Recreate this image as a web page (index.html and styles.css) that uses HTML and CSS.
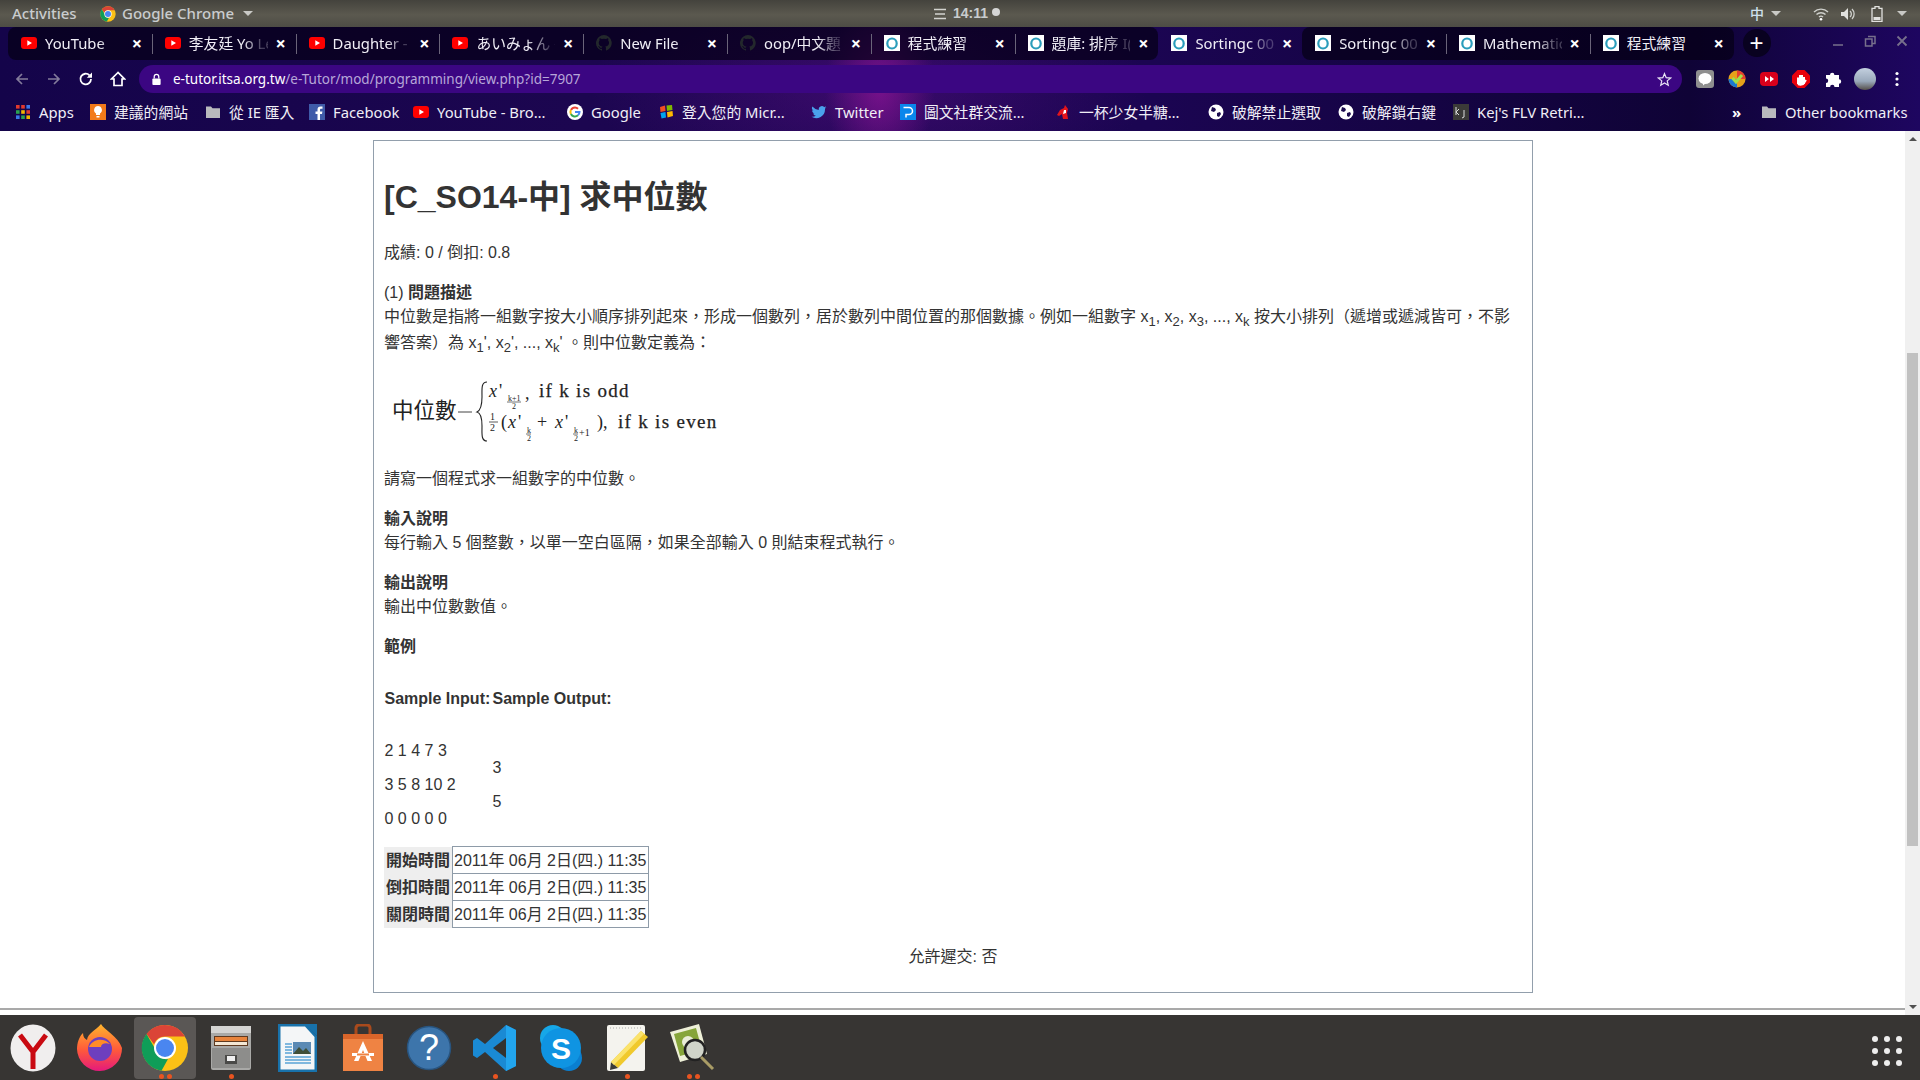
FILE: index.html
```html
<!DOCTYPE html>
<html lang="zh-Hant">
<head>
<meta charset="utf-8">
<title>程式練習</title>
<link rel="stylesheet" href="styles.css">
</head>
<body>
<svg class="defs" aria-hidden="true">
  <symbol id="i-yt" viewBox="0 0 16 16"><rect x="0" y="2" width="16" height="12" rx="3" fill="#f00"/><path d="M6.3 5.2 11 8l-4.700 2.800z" fill="#fff"/></symbol>
  <symbol id="i-tutor" viewBox="0 0 16 16"><rect width="16" height="16" fill="#fff"/><ellipse cx="8" cy="8.500" rx="4.700" ry="5" fill="none" stroke="#2a9dbb" stroke-width="2.200"/></symbol>
  <symbol id="i-gh" viewBox="0 0 16 16"><path fill="#23282c" d="M8 0a8 8 0 0 0-2.500 15.600c.4.100.5-.2.500-.4v-1.400c-2.200.5-2.700-1-2.700-1-.4-.9-.9-1.200-.9-1.200-.7-.5.100-.5.100-.5.800.1 1.200.8 1.200.8.700 1.200 1.900.9 2.300.7.100-.5.300-.9.500-1.100-1.800-.2-3.700-.9-3.700-4 0-.9.300-1.600.8-2.100-.1-.2-.4-1 .1-2.100 0 0 .7-.2 2.200.8a7.600 7.600 0 0 1 4 0c1.500-1 2.200-.8 2.200-.8.400 1.100.2 1.900.1 2.100.5.600.8 1.300.8 2.100 0 3.100-1.900 3.700-3.700 3.900.3.300.6.700.6 1.500v2.200c0 .2.100.5.600.4A8 8 0 0 0 8 0z"/></symbol>
  <symbol id="i-chrome" viewBox="0 0 48 48"><circle cx="24" cy="24" r="23" fill="#fbc116"/><path d="M24 1a23 23 0 0 1 20 11.500H24a11.500 11.500 0 0 0-10.900 7.800L5.500 9.900A23 23 0 0 1 24 1z" fill="#db4437"/><path d="M5.500 9.900l10 17.300A9.500 9.500 0 0 0 27 35l-6.500 11.700A23 23 0 0 1 5.500 9.900z" fill="#0f9d58"/><circle cx="24" cy="24" r="11" fill="#fff"/><circle cx="24" cy="24" r="9" fill="#4a86f0"/></symbol>
  <symbol id="i-globe" viewBox="0 0 16 16"><circle cx="8" cy="8" r="7.500" fill="#fff"/><path d="M4 3l3 1 1 2-2 2-3-1zM9 9l3-1 1 2-2 3-2-1z" fill="#1c0b4e"/></symbol>
  <symbol id="i-folder" viewBox="0 0 16 16"><path d="M1 2.500h5l1.500 1.800H15V14H1z" fill="#b9b9bd"/></symbol>
</svg>

<div class="topbar">
  <div class="top-left">
    <span class="activities">Activities</span>
    <span class="appmenu"><svg class="ico16"><use href="#i-chrome"/></svg><span>Google Chrome</span><i class="caret"></i></span>
  </div>
  <div class="top-center">
    <svg class="cal" viewBox="0 0 12 12"><path d="M0 1.500h12M1 6h10M0 10.500h12" stroke="#d3d3cf" stroke-width="1.500"/></svg>
    <b>14:11</b><i class="dot"></i>
  </div>
  <div class="top-right">
    <span class="ime">中</span><i class="caret"></i>
    <svg class="tray-wifi" viewBox="0 0 16 14"><path d="M1 5a10 10 0 0 1 14 0M3.500 7.500a6.500 6.500 0 0 1 9 0M6 10a3 3 0 0 1 4 0" fill="none" stroke="#cfd0cc" stroke-width="1.400"/><circle cx="8" cy="12.200" r="1.300" fill="#fff"/></svg>
    <svg class="tray-vol" viewBox="0 0 16 14"><path d="M1 5h3l4-4v12l-4-4H1z" fill="#e2e2df"/><path d="M10 4a4 4 0 0 1 0 6M12 2a7 7 0 0 1 0 10" fill="none" stroke="#cfd0cc" stroke-width="1.300"/></svg>
    <svg class="tray-bat" viewBox="0 0 12 16"><path d="M4 .700h4v1.600h3v13H1v-13h3z" fill="none" stroke="#e2e2df" stroke-width="1.300"/><rect x="2.500" y="11" width="7" height="3" fill="#e2e2df"/></svg>
    <i class="caret"></i>
  </div>
</div>

<header class="chrome">
  <div class="tabstrip">
    <div class="tab dark first"><svg class="ico16"><use href="#i-yt"/></svg><span class="tab-title">YouTube</span><span class="tab-x">×</span></div>
    <div class="tab dark sep"><svg class="ico16"><use href="#i-yt"/></svg><span class="tab-title">李友廷 Yo Le</span><span class="tab-x">×</span></div>
    <div class="tab dark sep"><svg class="ico16"><use href="#i-yt"/></svg><span class="tab-title">Daughter - S</span><span class="tab-x">×</span></div>
    <div class="tab dark sep"><svg class="ico16"><use href="#i-yt"/></svg><span class="tab-title">あいみょん -</span><span class="tab-x">×</span></div>
    <div class="tab dark sep"><svg class="ico16"><use href="#i-gh"/></svg><span class="tab-title">New File</span><span class="tab-x">×</span></div>
    <div class="tab dark sep"><svg class="ico16"><use href="#i-gh"/></svg><span class="tab-title">oop/中文題</span><span class="tab-x">×</span></div>
    <div class="tab dark sep"><svg class="ico16"><use href="#i-tutor"/></svg><span class="tab-title">程式練習</span><span class="tab-x">×</span></div>
    <div class="tab dark last sep"><svg class="ico16"><use href="#i-tutor"/></svg><span class="tab-title">題庫: 排序 I(</span><span class="tab-x">×</span></div>
    <div class="tab"><svg class="ico16"><use href="#i-tutor"/></svg><span class="tab-title">Sortingc 00</span><span class="tab-x">×</span></div>
    <div class="tab dark first"><svg class="ico16"><use href="#i-tutor"/></svg><span class="tab-title">Sortingc 00</span><span class="tab-x">×</span></div>
    <div class="tab dark sep"><svg class="ico16"><use href="#i-tutor"/></svg><span class="tab-title">Mathematic</span><span class="tab-x">×</span></div>
    <div class="tab dark sep last"><svg class="ico16"><use href="#i-tutor"/></svg><span class="tab-title plain">程式練習</span><span class="tab-x">×</span></div>
    <span class="newtab">+</span>
    <div class="winctl">
      <svg viewBox="0 0 12 12"><path d="M1 10h10" stroke="#77708c" stroke-width="1.500"/></svg>
      <svg viewBox="0 0 12 12"><path d="M4 1.500h7v7H8M1.500 4h6.500v7h-6.500z" fill="none" stroke="#77708c" stroke-width="1.500"/></svg>
      <svg viewBox="0 0 12 12"><path d="M1.500 1.500l9 9M10.500 1.500l-9 9" stroke="#77708c" stroke-width="1.800"/></svg>
    </div>
  </div>

  <div class="toolbar">
    <svg class="nav" viewBox="0 0 16 16"><path d="M14 8H3M8 3 3 8l5 5" fill="none" stroke="#837b9b" stroke-width="1.700"/></svg>
    <svg class="nav" viewBox="0 0 16 16"><path d="M2 8h11M8 3l5 5-5 5" fill="none" stroke="#837b9b" stroke-width="1.700"/></svg>
    <svg class="nav" viewBox="0 0 16 16"><path d="M13 8a5.300 5.300 0 1 1-1.500-3.700" fill="none" stroke="#fff" stroke-width="1.800"/><path d="M14 1.500v5.200H8.800z" fill="#fff"/></svg>
    <svg class="nav" viewBox="0 0 16 16"><path d="M8 1.500 1.500 8H4v6.500h8V8h2.500z" fill="none" stroke="#fff" stroke-width="1.700"/></svg>
    <div class="omnibox">
      <svg class="lock" viewBox="0 0 12 14"><path d="M3.500 6V4a2.500 2.500 0 0 1 5 0v2" fill="none" stroke="#fff" stroke-width="1.400"/><rect x="1.500" y="6" width="9" height="7" rx="1" fill="#fff"/></svg>
      <span class="url"><b>e-tutor.itsa.org.tw</b>/e-Tutor/mod/programming/view.php?id=7907</span>
      <svg class="star" viewBox="0 0 16 16"><path d="m8 1.800 1.800 4.300 4.700.4-3.600 3 1.100 4.600L8 11.700l-4 2.400 1.100-4.600-3.600-3 4.700-.4z" fill="none" stroke="#e9e4f4" stroke-width="1.300"/></svg>
    </div>
    <div class="exts">
      <svg viewBox="0 0 18 18"><rect width="18" height="18" rx="3" fill="#8f8f8f"/><ellipse cx="9" cy="8.500" rx="6.500" ry="5.500" fill="#fff"/><path d="M7 13h3l-3 2.500z" fill="#fff"/></svg>
      <svg viewBox="0 0 18 18"><circle cx="9" cy="9" r="8.500" fill="#e6a21a"/><path d="M9 .5A8.500 8.500 0 0 1 17.500 9H9z" fill="#e43f30"/><path d="M.5 9A8.500 8.500 0 0 0 9 17.500V9z" fill="#1b78d0"/><path d="M4.500 8 8 12l6-7" fill="none" stroke="#9fe04a" stroke-width="3"/></svg>
      <svg viewBox="0 0 18 18"><rect y="2" width="18" height="14" rx="4" fill="#d9001b"/><path d="M5 6l4 3-4 3zM10 6l4 3-4 3z" fill="#fff"/></svg>
      <svg viewBox="0 0 18 18"><path d="M5.500 0h7L18 5.500v7L12.500 18h-7L0 12.500v-7z" fill="#e8000b"/><path d="M6 14V7.500M8 14V5M10 14V5M12 14V7M6 14c2 1 5 1 6-1l2-3" fill="none" stroke="#fff" stroke-width="2"/></svg>
      <svg viewBox="0 0 18 18"><path d="M2 5h4a2.200 2.200 0 1 1 4.400 0H15v4.300a2.200 2.200 0 1 1 0 4.400V17h-4.500a2.200 2.200 0 1 0-4.400 0H2v-4a2.200 2.200 0 1 0 0-4.400z" fill="#fff"/></svg>
      <svg class="avatar" viewBox="0 0 22 22"><defs><linearGradient id="av" x1="0" x2="0" y1="0" y2="1"><stop offset="0" stop-color="#c3d0df"/><stop offset=".6" stop-color="#9aa9bb"/><stop offset="1" stop-color="#554f4a"/></linearGradient></defs><circle cx="11" cy="11" r="11" fill="url(#av)"/></svg>
      <svg viewBox="0 0 18 18"><circle cx="9" cy="3.500" r="1.600" fill="#fff"/><circle cx="9" cy="9" r="1.600" fill="#fff"/><circle cx="9" cy="14.500" r="1.600" fill="#fff"/></svg>
    </div>
  </div>

  <nav class="bookmarks">
    <div class="bm"><svg class="ico16" viewBox="0 0 16 16"><g fill="#e23a2e"><rect x="1" y="1" width="3.600" height="3.600"/><rect x="6.200" y="1" width="3.600" height="3.600"/></g><rect x="11.400" y="1" width="3.600" height="3.600" fill="#3a77e8"/><rect x="1" y="6.200" width="3.600" height="3.600" fill="#2aa24f"/><rect x="6.200" y="6.200" width="3.600" height="3.600" fill="#f4b400"/><rect x="11.400" y="6.200" width="3.600" height="3.600" fill="#e23a2e"/><rect x="1" y="11.400" width="3.600" height="3.600" fill="#3a77e8"/><rect x="6.200" y="11.400" width="3.600" height="3.600" fill="#2aa24f"/><rect x="11.400" y="11.400" width="3.600" height="3.600" fill="#f4b400"/></svg><span>Apps</span></div>
    <div class="bm"><svg class="ico16" viewBox="0 0 16 16"><rect width="16" height="16" fill="#f27a1a"/><path d="M8 2a4 4 0 0 0-2 7.400V11h4V9.400A4 4 0 0 0 8 2zM6.500 12h3v1.500h-3z" fill="#fff"/></svg><span>建議的網站</span></div>
    <div class="bm"><svg class="ico16"><use href="#i-folder"/></svg><span>從 IE 匯入</span></div>
    <div class="bm"><svg class="ico16" viewBox="0 0 16 16"><rect width="16" height="16" fill="#3f5ba9"/><path d="M11 16v-6h2l.4-2.500H11V6c0-.8.300-1.200 1.200-1.200h1.300V2.600c-.5 0-1.200-.1-1.900-.1-2 0-3.100 1.100-3.100 3.200v1.800H6.500V10h2v6z" fill="#fff"/></svg><span>Facebook</span></div>
    <div class="bm"><svg class="ico16"><use href="#i-yt"/></svg><span>YouTube - Bro…</span></div>
    <div class="bm"><svg class="ico16" viewBox="0 0 16 16"><circle cx="8" cy="8" r="8" fill="#fff"/><path d="M8 3.500a4.500 4.500 0 0 1 3 1.200" fill="none" stroke="#ea4335" stroke-width="2"/><path d="M4 6a4.500 4.500 0 0 1 4-2.500" fill="none" stroke="#ea4335" stroke-width="2"/><path d="M3.900 10a4.500 4.500 0 0 1 0-4" fill="none" stroke="#fbbc05" stroke-width="2"/><path d="M11 11.300A4.500 4.500 0 0 1 3.900 10" fill="none" stroke="#34a853" stroke-width="2"/><path d="M8 8h4.500a4.500 4.500 0 0 1-1.500 3.300" fill="none" stroke="#4285f4" stroke-width="2"/></svg><span>Google</span></div>
    <div class="bm"><svg class="ico16" viewBox="0 0 16 16"><path d="M2 3l5-1.500L7.500 7 2.500 8z" fill="#f25022"/><path d="M8.500 1.500 14 1l.5 5-5.500 1z" fill="#7fba00"/><path d="M2.500 9l5-1 .5 5.500-4.500 1z" fill="#00a4ef"/><path d="M9 8l5.500-1 .5 5-5.500 1.500z" fill="#ffb900"/></svg><span>登入您的 Micr…</span></div>
    <div class="bm"><svg class="ico16" viewBox="0 0 16 16"><path d="M15.500 3.500c-.6.300-1.200.4-1.800.5.600-.4 1.100-1 1.400-1.700-.6.400-1.300.6-2 .8a3.100 3.100 0 0 0-5.300 2.800A8.800 8.800 0 0 1 1.400 2.600 3.100 3.100 0 0 0 2.400 6.700c-.5 0-1-.2-1.400-.4 0 1.500 1.100 2.800 2.500 3.100-.5.100-.9.100-1.400 0 .4 1.200 1.500 2.100 2.900 2.100A6.200 6.200 0 0 1 .5 12.800 8.800 8.800 0 0 0 14 5v-.4c.6-.3 1.100-.7 1.500-1.100z" fill="#4aa1eb"/></svg><span>Twitter</span></div>
    <div class="bm"><svg class="ico16" viewBox="0 0 16 16"><rect width="16" height="16" fill="#0a86ec"/><path d="M3.500 3.500H9a3.500 3.500 0 0 1 0 7H6v3" fill="none" stroke="#fff" stroke-width="1.500"/></svg><span>圖文社群交流…</span></div>
    <div class="bm"><svg class="ico16" viewBox="0 0 16 16"><path d="M10 1 9 4 5 6 2 11l2 1 3-2 1 5h5l-1-6 1-4z" fill="#e3141b"/><path d="M9 6l2 0 0 3-3 1z" fill="#fff"/></svg><span>一杯少女半糖…</span></div>
    <div class="bm"><svg class="ico16"><use href="#i-globe"/></svg><span>破解禁止選取</span></div>
    <div class="bm"><svg class="ico16"><use href="#i-globe"/></svg><span>破解鎖右鍵</span></div>
    <div class="bm"><svg class="ico16" viewBox="0 0 16 16"><rect width="16" height="16" fill="#3b3a38"/><path d="M3 3v8M3 8l3-3M3 8l3 3M11 6v7l-2 1" fill="none" stroke="#ddd" stroke-width="1"/></svg><span>Kej's FLV Retri…</span></div>
    <span class="bm-more">»</span>
    <div class="bm other"><svg class="ico16"><use href="#i-folder"/></svg><span>Other bookmarks</span></div>
  </nav>
</header>

<div class="viewport">
  <main class="page">
    <article class="panel">
      <h2 class="title">[C_SO14-中] 求中位數</h2>
      <p class="para">成績: 0 / 倒扣: 0.8</p>
      <div class="para">
        <div>(1) <strong>問題描述</strong></div>
        <div class="desc">中位數是指將一組數字按大小順序排列起來，形成一個數列，居於數列中間位置的那個數據。例如一組數字 x<sub>1</sub>, x<sub>2</sub>, x<sub>3</sub>, ..., x<sub>k</sub> 按大小排列（遞增或遞減皆可，不影響答案）為 x<sub>1</sub>', x<sub>2</sub>', ..., x<sub>k</sub>' 。則中位數定義為：</div>
      </div>
      <svg class="formula" viewBox="0 5 340 75" aria-label="中位數公式">
        <text class="fm-cjk" x="8" y="47">中位數</text>
        <path d="M74 41h14" stroke="#444" stroke-width="1"/>
        <path d="M103 11C97 11 98 18 98 26 98 34 97 39 93 41 97 42 98 47 98 55 98 63 97 70 103 70" fill="none" stroke="#222" stroke-width="1.100"/>
        <text class="fm-i" x="105" y="26">x</text><text class="fm" x="115" y="26">'</text>
        <text class="fm-t" x="124" y="30">k+1</text><path d="M123 31h14" stroke="#333" stroke-width=".7"/><text class="fm-t" x="128" y="38">2</text>
        <text class="fm" x="141" y="28">,</text>
        <text class="fm-w" x="155" y="26">if k is odd</text>
        <text class="fm-s" x="106" y="49">1</text><path d="M105 51h9" stroke="#333" stroke-width=".8"/><text class="fm-s" x="106" y="60">2</text>
        <text class="fm" x="117" y="57">(</text><text class="fm-i" x="124" y="57">x</text><text class="fm" x="134" y="57">'</text>
        <text class="fm-t" x="143" y="62">k</text><path d="M142 63h5" stroke="#333" stroke-width=".7"/><text class="fm-t" x="143" y="70">2</text>
        <text class="fm" x="153" y="57">+</text>
        <text class="fm-i" x="171" y="57">x</text><text class="fm" x="181" y="57">'</text>
        <text class="fm-t" x="190" y="62">k</text><path d="M189 63h5" stroke="#333" stroke-width=".7"/><text class="fm-t" x="190" y="70">2</text><text class="fm-t2" x="195" y="65">+1</text>
        <text class="fm" x="213" y="57">),</text>
        <text class="fm-w" x="234" y="57">if k is even</text>
      </svg>
      <p class="para">請寫一個程式求一組數字的中位數。</p>
      <div class="para"><strong>輸入說明</strong><br>每行輸入 5 個整數，以單一空白區隔，如果全部輸入 0 則結束程式執行。</div>
      <div class="para"><strong>輸出說明</strong><br>輸出中位數數值。</div>
      <div class="para"><strong>範例</strong></div>
      <div class="sample">
        <strong>Sample Input:</strong><strong>Sample Output:</strong>
        <div class="sample-col"><p>2 1 4 7 3</p><p>3 5 8 10 2</p><p>0 0 0 0 0</p></div>
        <div class="sample-col"><p>3</p><p>5</p></div>
      </div>
      <table class="times">
        <tr><th>開始時間</th><td>2011年 06月 2日(四.) 11:35</td></tr>
        <tr><th>倒扣時間</th><td>2011年 06月 2日(四.) 11:35</td></tr>
        <tr><th>關閉時間</th><td>2011年 06月 2日(四.) 11:35</td></tr>
      </table>
      <p class="late">允許遲交: 否</p>
    </article>
    <div class="page-rule"></div>
  </main>
  <aside class="scrollbar">
    <i class="arrow-up"></i>
    <div class="track"><div class="thumb"></div></div>
    <i class="arrow-down"></i>
  </aside>
</div>

<footer class="dock">
  <div class="dock-item"><svg viewBox="0 0 48 48"><ellipse cx="24" cy="24" rx="22.500" ry="23.500" fill="#f0eeee"/><path d="M11 11l13 17 13-17M24 28v17" fill="none" stroke="#c90a12" stroke-width="5"/></svg></div>
  <div class="dock-item"><svg viewBox="0 0 48 48"><defs><linearGradient id="ff" x1="0" x2="0" y1="0" y2="1"><stop offset="0" stop-color="#ffb52c"/><stop offset=".55" stop-color="#ff5a3a"/><stop offset="1" stop-color="#e5197c"/></linearGradient></defs><path d="M26 0c3 6 17 12 21 24a22.500 22.500 0 1 1-45 1C2 19 4 13 8 9c0 4 2 6 4 7 1-7 8-9 14-16z" fill="url(#ff)"/><circle cx="25" cy="25" r="12" fill="#6d3fbe"/><path d="M14 23c3-8 15-10 21-3-5-2-9 0-9 3-4 0-8 0-12 0z" fill="#ff8c26"/></svg></div>
  <div class="dock-item active"><svg viewBox="0 0 48 48"><use href="#i-chrome"/></svg><span class="pips"><i></i><i></i></span></div>
  <div class="dock-item"><svg viewBox="0 0 48 48"><rect x="4" y="2" width="40" height="44" rx="2" fill="#a9a9a7"/><rect x="4" y="2" width="40" height="7" fill="#d4d4d2"/><rect x="7" y="12" width="34" height="10" fill="#5e3a20"/><rect x="8" y="13" width="32" height="4" fill="#e8843c"/><rect x="8" y="18" width="32" height="3" fill="#f3e7d4"/><rect x="5" y="24" width="38" height="20" fill="#8d8d8b"/><rect x="18" y="31" width="12" height="9" fill="#4a4a48"/><rect x="20" y="32" width="8" height="5" fill="#efefef"/></svg><span class="pips"><i></i></span></div>
  <div class="dock-item"><svg viewBox="0 0 48 48"><path d="M5 0h28l11 12v36H5z" fill="#1872ab"/><path d="M7.500 2.500h24.500l9.500 10.500v32.500h-34z" fill="#f4f6f7"/><path d="M32 0h12v12z" fill="#1872ab"/><rect x="20" y="18" width="18" height="12" fill="#5b8ab4"/><path d="M20 30l6-7 4 4 3-3 5 6z" fill="#3f4f38"/><path d="M12 20h7M12 23h7M12 26h7M12 29h7M12 33h26M12 36h26M12 39h26" stroke="#5aa4d6" stroke-width="1.600"/></svg></div>
  <div class="dock-item"><svg viewBox="0 0 48 48"><rect x="17" y="1" width="14" height="14" rx="3" fill="none" stroke="#a94a1c" stroke-width="3"/><path d="M4 10h40v37H4z" fill="#ef8343"/><path d="M4 10h40v5H4z" fill="#d9652a"/><path d="M24 17l-9 20h4.500l4.500-11 4.500 11H33z" fill="#fff"/><rect x="13" y="29" width="22" height="3" fill="#fff"/><rect x="18" y="29.500" width="12" height="2" fill="#ef8343"/></svg></div>
  <div class="dock-item"><svg class="help" viewBox="0 0 48 48"><circle cx="24" cy="24" r="21.500" fill="#3d75ab" stroke="#28547f" stroke-width="1.500"/><text class="help-q" x="24" y="36">?</text></svg></div>
  <div class="dock-item"><svg viewBox="0 0 48 48"><path d="M34 1 44 6v36l-10 5-21-19-8 6-4-2.500V16.500L5 14l8 6z" fill="#1a8ad4" transform="translate(1 0)"/><path d="M35 1l10 5v36l-10 5z" fill="#22a5ee"/><path d="M35 14 22 24l13 10z" fill="#333230"/></svg><span class="pips"><i></i></span></div>
  <div class="dock-item"><svg viewBox="0 0 48 48"><circle cx="16" cy="14" r="13" fill="#16a7e8"/><circle cx="32" cy="34" r="13" fill="#0a7fd0"/><circle cx="24" cy="24" r="20" fill="#0f94e2"/><text class="skype-s" x="24" y="35">S</text></svg></div>
  <div class="dock-item"><svg viewBox="0 0 48 48"><rect x="4" y="1" width="38" height="46" rx="2" fill="#f4f3ee"/><path d="M7 4h32" stroke="#aaa" stroke-width="1" stroke-dasharray="1 2"/><path d="M8 38 38 7l7 6-30 31z" fill="#f0c92c"/><path d="M8 38l7 6-8 2z" fill="#3a3a38"/><path d="M8 38 38 7l3 3L11 41z" fill="#fbe36c"/></svg><span class="pips"><i></i></span></div>
  <div class="dock-item"><svg viewBox="0 0 48 48"><path d="M1 8 30 0l8 30-27 8z" fill="#eef0d8"/><path d="M5 10l22-6 6 22-22 6z" fill="#86a53a"/><circle cx="19" cy="18" r="6" fill="#e9edd8"/><circle cx="26" cy="26" r="10" fill="#d0d4c9" stroke="#222" stroke-width="2.500"/><path d="M32 33l12 12" stroke="#a99c66" stroke-width="3"/></svg><span class="pips"><i></i><i></i></span></div>
  <div class="appgrid"><i></i><i></i><i></i><i></i><i></i><i></i><i></i><i></i><i></i></div>
</footer>
</body>
</html>
```
FILE: styles.css
```css
* { box-sizing: border-box; }
html, body { height: 100%; }
body {
  margin: 0;
  width: 1920px;
  height: 1080px;
  overflow: hidden;
  display: flex;
  flex-direction: column;
  background: #fff;
  color: #333;
  font: 16px/24px "Liberation Sans", "Noto Sans CJK TC", sans-serif;
}
.defs { position: absolute; width: 0; height: 0; }
.ico16 { width: 16px; height: 16px; flex: none; }

/* GNOME top bar */
.topbar {
  height: 27px;
  flex: none;
  display: grid;
  grid-template-columns: 1fr auto 1fr;
  align-items: center;
  padding: 0 13px 0 12px;
  background: linear-gradient(#44433d, #5b594f 55%, #4d4c45);
  color: #c9ccce;
  font: 500 15px/27px "Noto Sans", "Noto Sans CJK TC", sans-serif;
}
.top-left { display: flex; align-items: center; }
.activities { width: 88px; }
.appmenu { display: flex; align-items: center; gap: 6px; }
.caret {
  display: inline-block;
  width: 0; height: 0;
  border: 5px solid transparent;
  border-top: 5px solid #c9c9c5;
  border-bottom: 0;
}
.appmenu .caret { margin-left: 3px; }
.top-center { display: flex; align-items: center; gap: 7px; padding-left: 15px; }
.top-center b { font: 700 14px/27px "Liberation Sans", sans-serif; }
.cal { width: 12px; height: 12px; }
.dot { width: 8px; height: 8px; border-radius: 50%; background: #d5d5d5; margin: -4px 0 0 -3px; }
.top-right { display: flex; align-items: center; justify-content: flex-end; }
.ime { font-size: 14px; color: #cfe0ee; margin-right: 7px; }
.tray-wifi { width: 16px; height: 14px; margin-left: 32px; }
.tray-vol { width: 16px; height: 14px; margin-left: 11px; }
.tray-bat { width: 12px; height: 16px; margin-left: 15px; margin-right: 14px; }

/* Browser frame */
.chrome {
  flex: none;
  height: 104px;
  color: #f0eef6;
  font-family: "Noto Sans", "Noto Sans CJK TC", sans-serif;
  background:
    radial-gradient(ellipse 55px 90px at 880px 60px, rgba(140, 20, 150, .75), transparent),
    radial-gradient(ellipse 280px 110px at 870px 60px, rgba(85, 15, 130, .55), transparent),
    linear-gradient(90deg, #14044a 0, #1c0650 30%, #1b0552 60%, #0f0336 88%, #1e0660 100%);
}
.tabstrip { height: 38px; display: flex; align-items: flex-start; padding: 0 0 0 8px; }
.tab {
  width: 143.800px;
  height: 33px;
  flex: none;
  display: flex;
  align-items: center;
  padding: 0 7px 1px 13px;
  position: relative;
  font-size: 14.800px;
}
.tab.dark { background: rgba(6, 0, 22, .72); }
.tab.first { border-radius: 8px 0 0 8px; }
.tab.last { border-radius: 0 8px 8px 0; }
.tab.sep::before {
  content: "";
  position: absolute;
  left: 0; top: 7px;
  width: 1px; height: 20px;
  background: #6a6479;
}
.tab-title {
  flex: 1;
  min-width: 0;
  margin-left: 8px;
  white-space: nowrap;
  overflow: hidden;
  -webkit-mask-image: linear-gradient(90deg, #000 68%, rgba(0, 0, 0, .25) 92%);
  mask-image: linear-gradient(90deg, #000 68%, rgba(0, 0, 0, .25) 92%);
}
.tab-title.plain { -webkit-mask-image: none; mask-image: none; }
.tab-x { width: 16px; margin-left: 5px; font-size: 18px; font-weight: 700; text-align: center; color: #fff; }
.newtab {
  width: 28px; height: 28px;
  margin: 2px 0 0 9px;
  border-radius: 50%;
  background: #090220;
  color: #fff;
  font: 24px/27px "Liberation Sans", sans-serif;
  text-align: center;
  flex: none;
}
.winctl { flex: 1; display: flex; justify-content: flex-end; gap: 20px; padding: 8px 12px 0 0; }
.winctl svg { width: 12px; height: 12px; }

.toolbar { height: 28px; display: flex; align-items: center; padding-left: 14px; }
.nav { width: 16px; height: 16px; margin-right: 16px; flex: none; }
.nav:nth-child(4) { margin-right: 13px; }
.omnibox {
  width: 1543px;
  height: 28px;
  border-radius: 14px;
  background: #3b0682;
  display: flex;
  align-items: center;
  padding: 0 10px 0 12px;
  font-size: 13.500px;
  flex: none;
}
.lock { width: 11px; height: 13px; margin-right: 11px; flex: none; }
.url { flex: 1; color: #b7a6d8; white-space: nowrap; }
.url b { font-weight: 400; color: #fff; }
.star { width: 15px; height: 15px; flex: none; }
.exts { display: flex; align-items: center; gap: 14px; margin-left: 14px; }
.exts svg { width: 18px; height: 18px; flex: none; }
.exts .avatar { width: 22px; height: 22px; margin: 0 -2px; }

.bookmarks {
  height: 38px;
  display: grid;
  grid-template-columns: 75px 115px 104px 104px 154px 91px 153px 89px 155px 153px 130px 115px 279px 29px auto;
  align-items: center;
  padding: 0 0 1px 15px;
  font-size: 14.800px;
  white-space: nowrap;
}
.bm { display: flex; align-items: center; gap: 8px; }
.bm-more { color: #fff; font-weight: 700; font-size: 15px; }
.other { padding-left: 0; }

/* Web page */
.viewport { flex: 1; min-height: 0; display: flex; }
.page { flex: 1; min-width: 0; padding: 9px 0 0 373px; }
.panel {
  width: 1160px;
  height: 853px;
  border: 1px solid #929fac;
  padding: 0 10px;
}
.title {
  margin: 36px 0 24px;
  font-size: 32px;
  line-height: 40px;
  font-weight: 700;
}
.para { margin: 0 0 16px; }
.desc sub { font-size: 13px; line-height: 19px; }
.formula { display: block; width: 340px; height: 75px; margin: 19px 0 16px; }
.formula text { fill: #222; font-family: "Liberation Serif", serif; }
.formula .fm-cjk { font-family: "Noto Sans CJK TC", sans-serif; font-size: 21.500px; font-weight: 400; fill: #222; }
.formula .fm { font-size: 18px; }
.formula .fm-i { font-size: 18px; font-style: italic; }
.formula .fm-w { font-size: 19px; letter-spacing: 1.300px; stroke: #222; stroke-width: .25px; }
.formula .fm-t { font-size: 8px; }
.formula .fm-t2 { font-size: 10px; }
.formula .fm-s { font-size: 10px; }
.sample {
  display: grid;
  grid-template-columns: 108px 1fr;
  align-items: center;
  padding: 12px 0 0 .5px;
}
.sample-col { padding-top: 28px; }
.sample-col p { margin: 0 0 10px; }
.times {
  margin-top: 5px;
  border-collapse: collapse;
  width: 265px;
}
.times tr { height: 27px; }
.times th {
  width: 68px;
  padding: 2px 2px 0;
  background: #eee;
  font-weight: 700;
  white-space: nowrap;
}
.times td {
  padding: 2px 1px 0;
  border: 1px solid #8e9ba8;
  white-space: nowrap;
}
.late { margin: 17px 0 0; text-align: center; }
.page-rule { height: 2px; margin: 15px 0 0 -373px; background: #a9a9a9; }

.scrollbar {
  width: 15px;
  flex: none;
  background: #f0f0f0;
  display: flex;
  flex-direction: column;
  align-items: center;
}
.arrow-up, .arrow-down { width: 0; height: 0; border: 4px solid transparent; flex: none; }
.arrow-up { border-top: 0; border-bottom: 4px solid #505050; margin-top: 6px; }
.arrow-down { border-bottom: 0; border-top: 4px solid #505050; margin-bottom: 6px; }
.track { flex: 1; width: 11px; padding-top: 212px; }
.thumb { height: 493px; background: #c1c1c1; }

/* Dock */
.dock {
  flex: none;
  height: 65px;
  display: flex;
  background: #373533;
  padding: 2px 0 1px 0;
}
.dock-item {
  width: 66px;
  height: 62px;
  flex: none;
  position: relative;
  display: flex;
  justify-content: center;
  padding-top: 7px;
}
.dock-item svg { width: 48px; height: 48px; position: relative; }
.dock-item.active::before {
  content: "";
  position: absolute;
  inset: 0 2px;
  background: #5a5755;
  border-radius: 4px;
}
.pips {
  position: absolute;
  left: 0; right: 0; bottom: 0;
  display: flex;
  justify-content: center;
  gap: 3px;
}
.pips i { width: 5px; height: 5px; border-radius: 50%; background: #e95420; }
.help-q { font: 400 36px "Liberation Sans", sans-serif; fill: #fff; text-anchor: middle; }
.skype-s { font: 700 30px "Liberation Sans", sans-serif; fill: #fff; text-anchor: middle; }
.appgrid {
  margin: 19px 18px 0 auto;
  width: 30px;
  height: 30px;
  display: grid;
  grid-template-columns: repeat(3, 6px);
  grid-template-rows: repeat(3, 6px);
  gap: 6px;
}
.appgrid i { border-radius: 50%; background: #eee; }
```
